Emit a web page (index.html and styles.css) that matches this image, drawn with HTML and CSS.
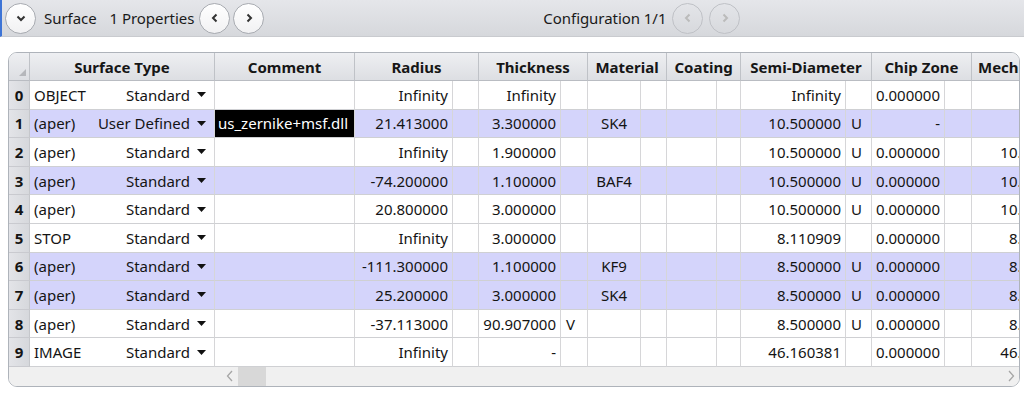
FILE: index.html
```html
<!DOCTYPE html>
<html>
<head>
<meta charset="utf-8">
<link rel="stylesheet" href="styles.css">
</head>
<body>
<div class="toolbar">
  <div class="group">
    <button class="cbtn"><svg width="12" height="12" viewBox="0 0 12 12"><path d="M2.5 4.5 L6 8 L9.5 4.5" fill="none" stroke="#333" stroke-width="2"/></svg></button>
    <span class="tlabel">Surface</span>
    <span class="tlabel props">1 Properties</span>
    <button class="cbtn"><svg width="12" height="12" viewBox="0 0 12 12"><path d="M7.5 2.5 L4 6 L7.5 9.5" fill="none" stroke="#333" stroke-width="2"/></svg></button>
    <button class="cbtn"><svg width="12" height="12" viewBox="0 0 12 12"><path d="M4.5 2.5 L8 6 L4.5 9.5" fill="none" stroke="#333" stroke-width="2"/></svg></button>
  </div>
  <div class="group config">
    <span class="tlabel">Configuration 1/1</span>
    <button class="cbtn off"><svg width="12" height="12" viewBox="0 0 12 12"><path d="M7.5 2.5 L4 6 L7.5 9.5" fill="none" stroke="#bbb" stroke-width="2"/></svg></button>
    <button class="cbtn off"><svg width="12" height="12" viewBox="0 0 12 12"><path d="M4.5 2.5 L8 6 L4.5 9.5" fill="none" stroke="#bbb" stroke-width="2"/></svg></button>
  </div>
</div>

<div class="grid">
  <div class="row head">
    <div class="h corner"><svg width="7" height="7" viewBox="0 0 7 7"><path d="M7 0 L7 7 L0 7 Z" fill="#b5b7bb"/></svg></div>
    <div class="h">Surface Type</div>
    <div class="h">Comment</div>
    <div class="h s2">Radius</div>
    <div class="h s2">Thickness</div>
    <div class="h s2">Material</div>
    <div class="h s2">Coating</div>
    <div class="h s2">Semi-Diameter</div>
    <div class="h s2">Chip Zone</div>
    <div class="h mech">Mech</div>
  </div>

  <div class="row">
    <div class="idx">0</div>
    <div class="c st"><span>OBJECT</span><span class="dd">Standard<svg class="tri" width="9" height="5" viewBox="0 0 9 5"><path d="M0 0 H9 L4.5 5 Z" fill="#111"/></svg></span></div>
    <div class="c"></div>
    <div class="c r">Infinity</div><div class="c"></div>
    <div class="c r">Infinity</div><div class="c"></div>
    <div class="c ctr"></div><div class="c"></div>
    <div class="c"></div><div class="c"></div>
    <div class="c r">Infinity</div><div class="c"></div>
    <div class="c r">0.000000</div><div class="c"></div>
    <div class="c r"></div>
  </div>

  <div class="row alt">
    <div class="idx">1</div>
    <div class="c st"><span>(aper)</span><span class="dd">User Defined<svg class="tri" width="9" height="5" viewBox="0 0 9 5"><path d="M0 0 H9 L4.5 5 Z" fill="#111"/></svg></span></div>
    <div class="c sel">us_zernike+msf.dll</div>
    <div class="c r">21.413000</div><div class="c"></div>
    <div class="c r">3.300000</div><div class="c"></div>
    <div class="c ctr">SK4</div><div class="c"></div>
    <div class="c"></div><div class="c"></div>
    <div class="c r">10.500000</div><div class="c">U</div>
    <div class="c r">-</div><div class="c"></div>
    <div class="c r"></div>
  </div>

  <div class="row">
    <div class="idx">2</div>
    <div class="c st"><span>(aper)</span><span class="dd">Standard<svg class="tri" width="9" height="5" viewBox="0 0 9 5"><path d="M0 0 H9 L4.5 5 Z" fill="#111"/></svg></span></div>
    <div class="c"></div>
    <div class="c r">Infinity</div><div class="c"></div>
    <div class="c r">1.900000</div><div class="c"></div>
    <div class="c ctr"></div><div class="c"></div>
    <div class="c"></div><div class="c"></div>
    <div class="c r">10.500000</div><div class="c">U</div>
    <div class="c r">0.000000</div><div class="c"></div>
    <div class="c r">10.500000</div>
  </div>

  <div class="row alt">
    <div class="idx">3</div>
    <div class="c st"><span>(aper)</span><span class="dd">Standard<svg class="tri" width="9" height="5" viewBox="0 0 9 5"><path d="M0 0 H9 L4.5 5 Z" fill="#111"/></svg></span></div>
    <div class="c"></div>
    <div class="c r">-74.200000</div><div class="c"></div>
    <div class="c r">1.100000</div><div class="c"></div>
    <div class="c ctr">BAF4</div><div class="c"></div>
    <div class="c"></div><div class="c"></div>
    <div class="c r">10.500000</div><div class="c">U</div>
    <div class="c r">0.000000</div><div class="c"></div>
    <div class="c r">10.500000</div>
  </div>

  <div class="row">
    <div class="idx">4</div>
    <div class="c st"><span>(aper)</span><span class="dd">Standard<svg class="tri" width="9" height="5" viewBox="0 0 9 5"><path d="M0 0 H9 L4.5 5 Z" fill="#111"/></svg></span></div>
    <div class="c"></div>
    <div class="c r">20.800000</div><div class="c"></div>
    <div class="c r">3.000000</div><div class="c"></div>
    <div class="c ctr"></div><div class="c"></div>
    <div class="c"></div><div class="c"></div>
    <div class="c r">10.500000</div><div class="c">U</div>
    <div class="c r">0.000000</div><div class="c"></div>
    <div class="c r">10.500000</div>
  </div>

  <div class="row">
    <div class="idx">5</div>
    <div class="c st"><span>STOP</span><span class="dd">Standard<svg class="tri" width="9" height="5" viewBox="0 0 9 5"><path d="M0 0 H9 L4.5 5 Z" fill="#111"/></svg></span></div>
    <div class="c"></div>
    <div class="c r">Infinity</div><div class="c"></div>
    <div class="c r">3.000000</div><div class="c"></div>
    <div class="c ctr"></div><div class="c"></div>
    <div class="c"></div><div class="c"></div>
    <div class="c r">8.110909</div><div class="c"></div>
    <div class="c r">0.000000</div><div class="c"></div>
    <div class="c r">8.110909</div>
  </div>

  <div class="row alt">
    <div class="idx">6</div>
    <div class="c st"><span>(aper)</span><span class="dd">Standard<svg class="tri" width="9" height="5" viewBox="0 0 9 5"><path d="M0 0 H9 L4.5 5 Z" fill="#111"/></svg></span></div>
    <div class="c"></div>
    <div class="c r">-111.300000</div><div class="c"></div>
    <div class="c r">1.100000</div><div class="c"></div>
    <div class="c ctr">KF9</div><div class="c"></div>
    <div class="c"></div><div class="c"></div>
    <div class="c r">8.500000</div><div class="c">U</div>
    <div class="c r">0.000000</div><div class="c"></div>
    <div class="c r">8.500000</div>
  </div>

  <div class="row alt">
    <div class="idx">7</div>
    <div class="c st"><span>(aper)</span><span class="dd">Standard<svg class="tri" width="9" height="5" viewBox="0 0 9 5"><path d="M0 0 H9 L4.5 5 Z" fill="#111"/></svg></span></div>
    <div class="c"></div>
    <div class="c r">25.200000</div><div class="c"></div>
    <div class="c r">3.000000</div><div class="c"></div>
    <div class="c ctr">SK4</div><div class="c"></div>
    <div class="c"></div><div class="c"></div>
    <div class="c r">8.500000</div><div class="c">U</div>
    <div class="c r">0.000000</div><div class="c"></div>
    <div class="c r">8.500000</div>
  </div>

  <div class="row">
    <div class="idx">8</div>
    <div class="c st"><span>(aper)</span><span class="dd">Standard<svg class="tri" width="9" height="5" viewBox="0 0 9 5"><path d="M0 0 H9 L4.5 5 Z" fill="#111"/></svg></span></div>
    <div class="c"></div>
    <div class="c r">-37.113000</div><div class="c"></div>
    <div class="c r">90.907000</div><div class="c">V</div>
    <div class="c ctr"></div><div class="c"></div>
    <div class="c"></div><div class="c"></div>
    <div class="c r">8.500000</div><div class="c">U</div>
    <div class="c r">0.000000</div><div class="c"></div>
    <div class="c r">8.500000</div>
  </div>

  <div class="row">
    <div class="idx">9</div>
    <div class="c st"><span>IMAGE</span><span class="dd">Standard<svg class="tri" width="9" height="5" viewBox="0 0 9 5"><path d="M0 0 H9 L4.5 5 Z" fill="#111"/></svg></span></div>
    <div class="c"></div>
    <div class="c r">Infinity</div><div class="c"></div>
    <div class="c r">-</div><div class="c"></div>
    <div class="c ctr"></div><div class="c"></div>
    <div class="c"></div><div class="c"></div>
    <div class="c r">46.160381</div><div class="c"></div>
    <div class="c r">0.000000</div><div class="c"></div>
    <div class="c r">46.160381</div>
  </div>

  <div class="hscroll">
    <span class="arrow"><svg width="8" height="12" viewBox="0 0 8 12"><path d="M6 1 L1.5 6 L6 11" fill="none" stroke="#a6a6a6" stroke-width="1.3"/></svg></span>
    <span class="thumb"></span>
    <span class="track"></span>
    <span class="arrow"><svg width="8" height="12" viewBox="0 0 8 12"><path d="M2 1 L6.5 6 L2 11" fill="none" stroke="#a6a6a6" stroke-width="1.3"/></svg></span>
  </div>
</div>
</body>
</html>
```

FILE: styles.css
```css
html, body {
  margin: 0;
  padding: 0;
}
body {
  width: 1024px;
  height: 393px;
  overflow: hidden;
  background: #ffffff;
  font-family: "Noto Sans", "Open Sans", sans-serif;
  color: #141414;
}

.toolbar {
  height: 37px;
  box-sizing: border-box;
  display: flex;
  align-items: center;
  background: linear-gradient(#e5e6ea, #d6d8dc);
  border-bottom: 1px solid #c9cbcf;
  border-left: 2px solid #3d74d6;
  padding-left: 3px;
}
.group {
  display: flex;
  align-items: center;
}
.config {
  margin-left: 271px;
}
.tlabel {
  font-size: 15px;
  color: #1a1a1a;
  margin-left: 5px;
  margin-right: 4px;
  letter-spacing: -0.05px;
}
.props {
  margin-left: 9px;
  margin-right: 5px;
}
.config .tlabel {
  margin-right: 6px;
}
.cbtn {
  width: 31px;
  height: 31px;
  box-sizing: border-box;
  border-radius: 50%;
  border: 1px solid #a8abb1;
  background: linear-gradient(#ffffff, #f1f1f3);
  padding: 0;
  margin: 0 3px 0 0;
  display: flex;
  align-items: center;
  justify-content: center;
}
.cbtn.off {
  border-color: #bfc1c6;
  background: transparent;
  margin-right: 6px;
}

.grid {
  margin: 15px 4px 0 8px;
  height: 335px;
  box-sizing: border-box;
  border: 1px solid #aeb3ba;
  border-radius: 9px;
  overflow: hidden;
  display: flex;
  flex-direction: column;
}
.row {
  display: grid;
  grid-template-columns: 21px 185px 140px 98px 26px 82px 27px 53px 26px 50px 24px 105px 26px 73px 27px 106px;
  height: 28.6px;
  flex: none;
  width: 1069px;
  background: #ffffff;
  font-size: 15px;
}
.row.alt {
  background: #d4d4fb;
}
.row.head {
  height: 28px;
  background: linear-gradient(#eeeff2, #dcdee2);
}
.h {
  box-sizing: border-box;
  border-right: 1px solid #bfc2c7;
  border-bottom: 1px solid #b9bcc2;
  font-weight: 700;
  font-size: 15px;
  display: flex;
  align-items: center;
  justify-content: center;
  color: #161616;
  white-space: nowrap;
  overflow: hidden;
}
.h.s2 {
  grid-column: span 2;
}
.h.mech {
  justify-content: flex-start;
  padding-left: 6px;
}
.h.corner {
  justify-content: flex-end;
  align-items: flex-end;
  padding: 0 3px 4px 0;
}
.idx {
  box-sizing: border-box;
  background: linear-gradient(90deg, #e3e4e8, #d6d8dc);
  border-right: 1px solid #c5c7cb;
  border-bottom: 1px solid #c9cacf;
  font-weight: 700;
  display: flex;
  align-items: center;
  justify-content: center;
}
.c {
  box-sizing: border-box;
  border-right: 1px solid #d6d6d8;
  border-bottom: 1px solid #cfd0d3;
  display: flex;
  align-items: center;
  padding: 0 5px;
  white-space: nowrap;
  overflow: hidden;
}
.c.r {
  justify-content: flex-end;
  padding-right: 4px;
}
.c.ctr {
  justify-content: center;
  padding: 0;
}
.c.st {
  justify-content: space-between;
  padding: 0 8px 0 4px;
}
.dd {
  display: flex;
  align-items: center;
}
.tri {
  margin-left: 7px;
}
.c.sel {
  background: #000000;
  color: #ffffff;
  padding-left: 3px;
}

.hscroll {
  flex: 1;
  display: flex;
  align-items: stretch;
  background: #f0f0f0;
  padding-left: 212px;
}
.arrow {
  width: 17px;
  display: flex;
  align-items: center;
  justify-content: center;
}
.thumb {
  width: 28px;
  background: #d8d8d8;
}
.track {
  flex: 1;
}
```
